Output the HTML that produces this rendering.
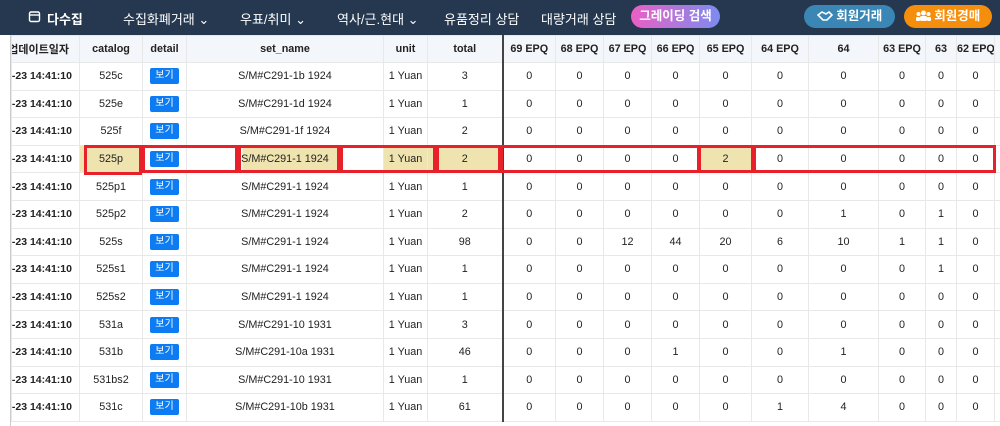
<!DOCTYPE html>
<html><head><meta charset="utf-8"><style>
*{margin:0;padding:0;box-sizing:border-box}
body{width:1000px;height:426px;overflow:hidden;background:#fff;font-family:"Liberation Sans","Noto Sans CJK KR",sans-serif;position:relative}
.nav{position:absolute;left:0;top:0;width:1000px;height:35px;background:#253850;color:#fff;font-size:13px}
.nav span{position:absolute;top:9px;white-space:nowrap}
.pill{position:absolute;top:5px;height:23px;border-radius:12px;color:#fff;font-size:12.5px;line-height:23px;text-align:center;font-weight:bold}
.wrap{position:absolute;left:10px;top:35px;width:990px;height:391px;overflow:hidden;border-left:1px solid #ccc}
table{border-collapse:collapse;table-layout:fixed;width:1013px;font-size:10.8px;color:#222}
td,th{border:1px solid #e8e8e8;text-align:center;white-space:nowrap;overflow:hidden;height:27.6px;padding:0}
th{background:#f3f6fa;font-weight:bold;height:27px;font-size:10.8px}
.d{font-weight:bold;background:#fff}
.d div{display:flex;justify-content:flex-end;padding-right:8px;width:68px;overflow:hidden;font-size:10.5px}
th.d div{padding-right:11px;font-size:11px}
th.d{background:#f3f6fa}
.sep{border-right:2px solid #444}
.b{display:inline-block;background:#0d7bf2;color:#fff;font-size:10px;padding:0 5px;height:16px;line-height:16px;border-radius:2px}
.y{background:#efe4b0}
.r{position:absolute;border:3px solid #e8202a}
</style></head><body>
<div class="nav">
<svg style="position:absolute;left:28px;top:10px" width="13" height="13" viewBox="0 0 13 13"><rect x="1.5" y="2" width="10" height="9.5" rx="1.5" fill="none" stroke="#fff" stroke-width="1.4"/><line x1="1.5" y1="5" x2="11.5" y2="5" stroke="#fff" stroke-width="1.4"/></svg>
<span style="left:47px;font-weight:bold">다수집</span>
<span style="left:123px">수집화폐거래 ⌄</span>
<span style="left:240px">우표/취미 ⌄</span>
<span style="left:337px">역사/근.현대 ⌄</span>
<span style="left:444px">유품정리 상담</span>
<span style="left:541px">대량거래 상담</span>
<div class="pill" style="left:631px;width:89px;background:linear-gradient(90deg,#ec5fc5,#7b8cf0)">그레이딩 검색</div>
<div class="pill" style="left:804px;width:91px;background:#3a87b5"><svg width="16" height="10" viewBox="0 0 16 10" style="vertical-align:-1px"><path d="M1 4 L5 1 L9 3 L12 1 L15 4 L10 9 L6 9 Z" fill="none" stroke="#fff" stroke-width="1.6"/></svg> 회원거래</div>
<div class="pill" style="left:904px;width:88px;background:#f58e0c"><svg width="15" height="11" viewBox="0 0 15 11" style="vertical-align:-1px"><circle cx="7.5" cy="3" r="2.5" fill="#fff"/><circle cx="2.5" cy="4" r="2" fill="#fff"/><circle cx="12.5" cy="4" r="2" fill="#fff"/><rect x="4" y="6" width="7" height="5" rx="1.5" fill="#fff"/><rect x="0" y="7" width="4" height="4" rx="1" fill="#fff"/><rect x="11" y="7" width="4" height="4" rx="1" fill="#fff"/></svg> 회원경매</div>
</div>
<div class="wrap">
<table>
<colgroup><col style="width:68px"><col style="width:63px"><col style="width:44px"><col style="width:197px"><col style="width:44px"><col style="width:75px"><col style="width:53px"><col style="width:48px"><col style="width:48px"><col style="width:48px"><col style="width:52px"><col style="width:57px"><col style="width:70px"><col style="width:47px"><col style="width:31px"><col style="width:38px"><col style="width:30px"></colgroup>
<tr><th class="d"><div>업데이트일자</div></th><th>catalog</th><th>detail</th><th>set_name</th><th>unit</th><th class="sep">total</th><th>69 EPQ</th><th>68 EPQ</th><th>67 EPQ</th><th>66 EPQ</th><th>65 EPQ</th><th>64 EPQ</th><th>64</th><th>63 EPQ</th><th>63</th><th>62 EPQ</th><th></th></tr>
<tr><td class="d"><div>2023-10-23 14:41:10</div></td><td>525c</td><td><span class="b">보기</span></td><td>S/M#C291-1b 1924</td><td>1 Yuan</td><td class="sep">3</td><td>0</td><td>0</td><td>0</td><td>0</td><td>0</td><td>0</td><td>0</td><td>0</td><td>0</td><td>0</td><td></td></tr>
<tr><td class="d"><div>2023-10-23 14:41:10</div></td><td>525e</td><td><span class="b">보기</span></td><td>S/M#C291-1d 1924</td><td>1 Yuan</td><td class="sep">1</td><td>0</td><td>0</td><td>0</td><td>0</td><td>0</td><td>0</td><td>0</td><td>0</td><td>0</td><td>0</td><td></td></tr>
<tr><td class="d"><div>2023-10-23 14:41:10</div></td><td>525f</td><td><span class="b">보기</span></td><td>S/M#C291-1f 1924</td><td>1 Yuan</td><td class="sep">2</td><td>0</td><td>0</td><td>0</td><td>0</td><td>0</td><td>0</td><td>0</td><td>0</td><td>0</td><td>0</td><td></td></tr>
<tr><td class="d"><div>2023-10-23 14:41:10</div></td><td class="y">525p</td><td><span class="b">보기</span></td><td style="background:linear-gradient(90deg,#fff 28%,#efe4b0 28%,#efe4b0 77%,#fff 77%)">S/M#C291-1 1924</td><td class="y">1 Yuan</td><td class="sep y">2</td><td>0</td><td>0</td><td>0</td><td>0</td><td class="y">2</td><td>0</td><td>0</td><td>0</td><td>0</td><td>0</td><td></td></tr>
<tr><td class="d"><div>2023-10-23 14:41:10</div></td><td>525p1</td><td><span class="b">보기</span></td><td>S/M#C291-1 1924</td><td>1 Yuan</td><td class="sep">1</td><td>0</td><td>0</td><td>0</td><td>0</td><td>0</td><td>0</td><td>0</td><td>0</td><td>0</td><td>0</td><td></td></tr>
<tr><td class="d"><div>2023-10-23 14:41:10</div></td><td>525p2</td><td><span class="b">보기</span></td><td>S/M#C291-1 1924</td><td>1 Yuan</td><td class="sep">2</td><td>0</td><td>0</td><td>0</td><td>0</td><td>0</td><td>0</td><td>1</td><td>0</td><td>1</td><td>0</td><td></td></tr>
<tr><td class="d"><div>2023-10-23 14:41:10</div></td><td>525s</td><td><span class="b">보기</span></td><td>S/M#C291-1 1924</td><td>1 Yuan</td><td class="sep">98</td><td>0</td><td>0</td><td>12</td><td>44</td><td>20</td><td>6</td><td>10</td><td>1</td><td>1</td><td>0</td><td></td></tr>
<tr><td class="d"><div>2023-10-23 14:41:10</div></td><td>525s1</td><td><span class="b">보기</span></td><td>S/M#C291-1 1924</td><td>1 Yuan</td><td class="sep">1</td><td>0</td><td>0</td><td>0</td><td>0</td><td>0</td><td>0</td><td>0</td><td>0</td><td>1</td><td>0</td><td></td></tr>
<tr><td class="d"><div>2023-10-23 14:41:10</div></td><td>525s2</td><td><span class="b">보기</span></td><td>S/M#C291-1 1924</td><td>1 Yuan</td><td class="sep">1</td><td>0</td><td>0</td><td>0</td><td>0</td><td>0</td><td>0</td><td>0</td><td>0</td><td>0</td><td>0</td><td></td></tr>
<tr><td class="d"><div>2023-10-23 14:41:10</div></td><td>531a</td><td><span class="b">보기</span></td><td>S/M#C291-10 1931</td><td>1 Yuan</td><td class="sep">3</td><td>0</td><td>0</td><td>0</td><td>0</td><td>0</td><td>0</td><td>0</td><td>0</td><td>0</td><td>0</td><td></td></tr>
<tr><td class="d"><div>2023-10-23 14:41:10</div></td><td>531b</td><td><span class="b">보기</span></td><td>S/M#C291-10a 1931</td><td>1 Yuan</td><td class="sep">46</td><td>0</td><td>0</td><td>0</td><td>1</td><td>0</td><td>0</td><td>1</td><td>0</td><td>0</td><td>0</td><td></td></tr>
<tr><td class="d"><div>2023-10-23 14:41:10</div></td><td>531bs2</td><td><span class="b">보기</span></td><td>S/M#C291-10 1931</td><td>1 Yuan</td><td class="sep">1</td><td>0</td><td>0</td><td>0</td><td>0</td><td>0</td><td>0</td><td>0</td><td>0</td><td>0</td><td>0</td><td></td></tr>
<tr><td class="d"><div>2023-10-23 14:41:10</div></td><td>531c</td><td><span class="b">보기</span></td><td>S/M#C291-10b 1931</td><td>1 Yuan</td><td class="sep">61</td><td>0</td><td>0</td><td>0</td><td>0</td><td>0</td><td>1</td><td>4</td><td>0</td><td>0</td><td>0</td><td></td></tr>
</table>
</div>
<div class="r" style="left:84px;top:145px;width:58px;height:30px"></div>
<div class="r" style="left:142px;top:145px;width:96px;height:28px"></div>
<div class="r" style="left:238px;top:145px;width:102px;height:28px"></div>
<div class="r" style="left:340px;top:145px;width:96px;height:28px"></div>
<div class="r" style="left:436px;top:145px;width:65px;height:28px"></div>
<div class="r" style="left:500px;top:145px;width:200px;height:28px"></div>
<div class="r" style="left:698px;top:145px;width:56px;height:28px"></div>
<div class="r" style="left:753px;top:145px;width:243px;height:28px"></div>
</body></html>
